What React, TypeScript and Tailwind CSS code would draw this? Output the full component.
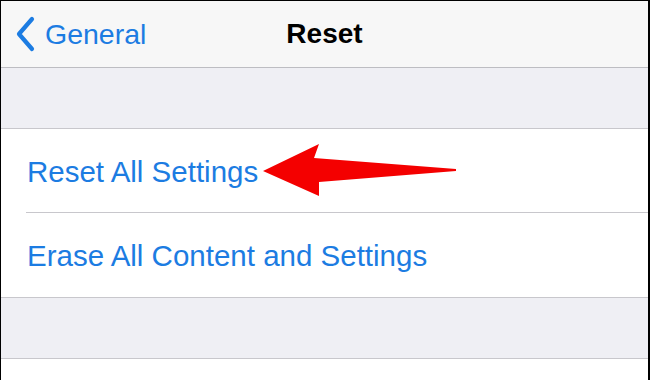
export default function App() {
  return (
    <div
      className="w-[650px] h-[380px] overflow-hidden bg-white border-t border-l border-r-2 border-black flex flex-col"
      style={{ fontFamily: '"Liberation Sans", Arial, sans-serif' }}
    >
      {/* nav bar */}
      <div className="h-[67px] shrink-0 bg-[#f7f7f7] border-b border-[#bdbdc2] relative flex items-center">
        <div className="flex items-center pl-[14px] text-[#1c7ce2]">
          <svg width="22" height="36" viewBox="0 0 22 36" className="mr-[8px]">
            <path d="M17 3 L4 18 L17 33" fill="none" stroke="currentColor" strokeWidth="4.2" strokeLinecap="round" strokeLinejoin="round" />
          </svg>
          <span className="text-[28.5px] leading-none">General</span>
        </div>
        <div className="absolute left-0 right-0 text-center text-[28px] leading-none font-semibold text-black pointer-events-none">
          Reset
        </div>
      </div>

      <div className="h-[61px] shrink-0 bg-[#efeff4] border-b border-[#c8c7cc]" />

      <div className="bg-white shrink-0">
        <div className="h-[83px] flex items-center pl-[26px] relative">
          <span className="text-[29.5px] leading-none text-[#1c7ce2] pt-[2px]">Reset All Settings</span>
          <svg className="absolute left-0 top-0" width="650" height="83" viewBox="0 130 650 83">
            <polygon points="262,172 318,145 313,159 455,170 455,172 318,183 318,197" fill="#f40000" />
          </svg>
        </div>
        <div className="ml-[25px] border-t border-[#c8c7cc]" />
        <div className="h-[84px] flex items-center pl-[26px]">
          <span className="text-[29.5px] leading-none text-[#1c7ce2] pt-[2px]">Erase All Content and Settings</span>
        </div>
      </div>

      <div className="h-[62px] shrink-0 border-t border-b border-[#c8c7cc] bg-[#efeff4]" />
      <div className="flex-1 bg-white" />
    </div>
  )
}
